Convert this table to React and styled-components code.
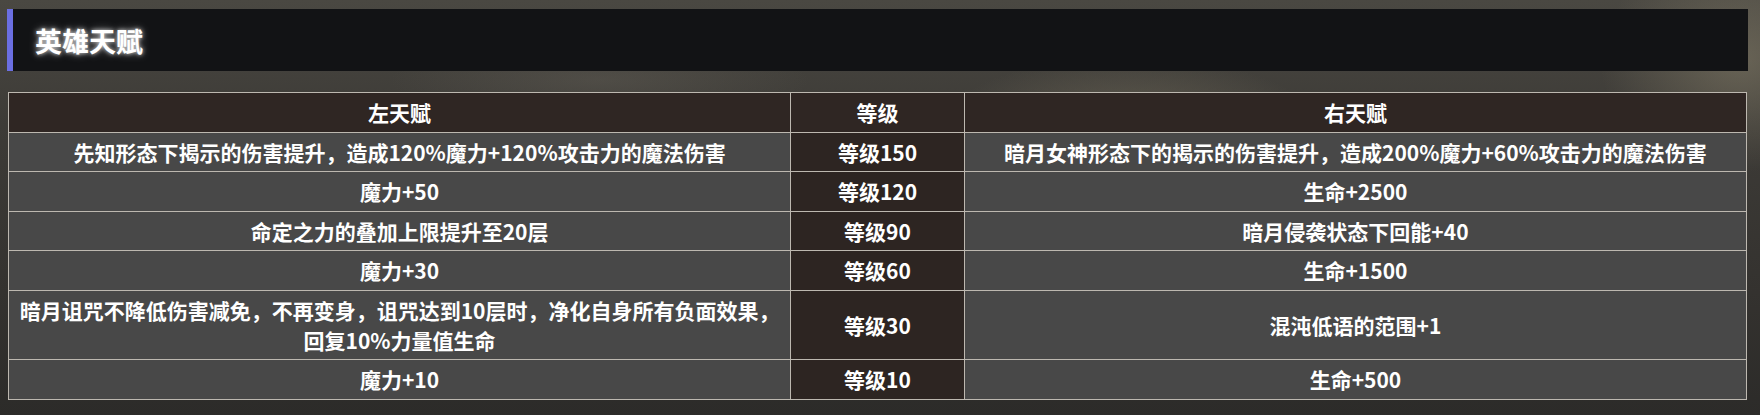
import styled, { createGlobalStyle } from "styled-components";

const GlobalStyle = createGlobalStyle`
  html, body {
    margin: 0;
    padding: 0;
  }

  body {
    min-height: 415px;
    font-family: "Noto Sans CJK SC", "Noto Sans", sans-serif;
    background:
      radial-gradient(ellipse 260px 90px at 1130px 120px, rgba(150, 140, 115, 0.35), transparent 70%),
      radial-gradient(ellipse 200px 160px at 1740px 60px, rgba(140, 132, 110, 0.5), transparent 70%),
      radial-gradient(ellipse 300px 60px at 600px 80px, rgba(120, 115, 105, 0.25), transparent 70%),
      linear-gradient(180deg, #4a4842 0%, #3d3b37 30%, #34322f 70%, #2c2b29 100%);
  }
`;

const Page = styled.div`
  padding: 9px 12px 17px 7px;
`;

const SectionHeader = styled.div`
  display: flex;
  align-items: center;
  height: 62px;
  background: #121315;
  border-left: 6px solid #6b6fe2;
  padding-left: 22px;
`;

const Title = styled.h2`
  margin: 0;
  font-size: 27px;
  font-weight: 700;
  color: #ffffff;
  text-shadow: 0 0 4px rgba(255, 255, 255, 0.8), 0 0 10px rgba(255, 255, 255, 0.4);
`;

const Table = styled.table`
  width: calc(100% - 2px);
  margin: 21px 1px 0;
  border-collapse: collapse;
  table-layout: fixed;
  border: 1px solid #bdb8b0;
`;

const Th = styled.th`
  padding: 4px 4px;
  background: #2f2623;
  border: 1px solid #bdb8b0;
  color: #ffffff;
  font-size: 21px;
  font-weight: 700;
  line-height: 31px;
  text-align: center;
`;

const Td = styled.td`
  padding: 4px 4px;
  background: ${({ $level }) => ($level ? "#2d2522" : "#484848")};
  border: 1px solid #bdb8b0;
  color: #ffffff;
  font-size: 21px;
  font-weight: 700;
  line-height: 30.4px;
  text-align: center;
`;

const rows = [
  {
    left: "先知形态下揭示的伤害提升，造成120%魔力+120%攻击力的魔法伤害",
    level: "等级150",
    right: "暗月女神形态下的揭示的伤害提升，造成200%魔力+60%攻击力的魔法伤害",
  },
  { left: "魔力+50", level: "等级120", right: "生命+2500" },
  { left: "命定之力的叠加上限提升至20层", level: "等级90", right: "暗月侵袭状态下回能+40" },
  { left: "魔力+30", level: "等级60", right: "生命+1500" },
  {
    left: (
      <>
        暗月诅咒不降低伤害减免，不再变身，诅咒达到10层时，净化自身所有负面效果，
        <br />
        回复10%力量值生命
      </>
    ),
    level: "等级30",
    right: "混沌低语的范围+1",
  },
  { left: "魔力+10", level: "等级10", right: "生命+500" },
];

export default function App() {
  return (
    <>
      <GlobalStyle />
      <Page>
        <SectionHeader>
          <Title>英雄天赋</Title>
        </SectionHeader>
        <Table>
          <colgroup>
            <col style={{ width: "45%" }} />
            <col style={{ width: "10%" }} />
            <col style={{ width: "45%" }} />
          </colgroup>
          <thead>
            <tr>
              <Th>左天赋</Th>
              <Th>等级</Th>
              <Th>右天赋</Th>
            </tr>
          </thead>
          <tbody>
            {rows.map((row) => (
              <tr key={row.level}>
                <Td>{row.left}</Td>
                <Td $level>{row.level}</Td>
                <Td>{row.right}</Td>
              </tr>
            ))}
          </tbody>
        </Table>
      </Page>
    </>
  );
}
